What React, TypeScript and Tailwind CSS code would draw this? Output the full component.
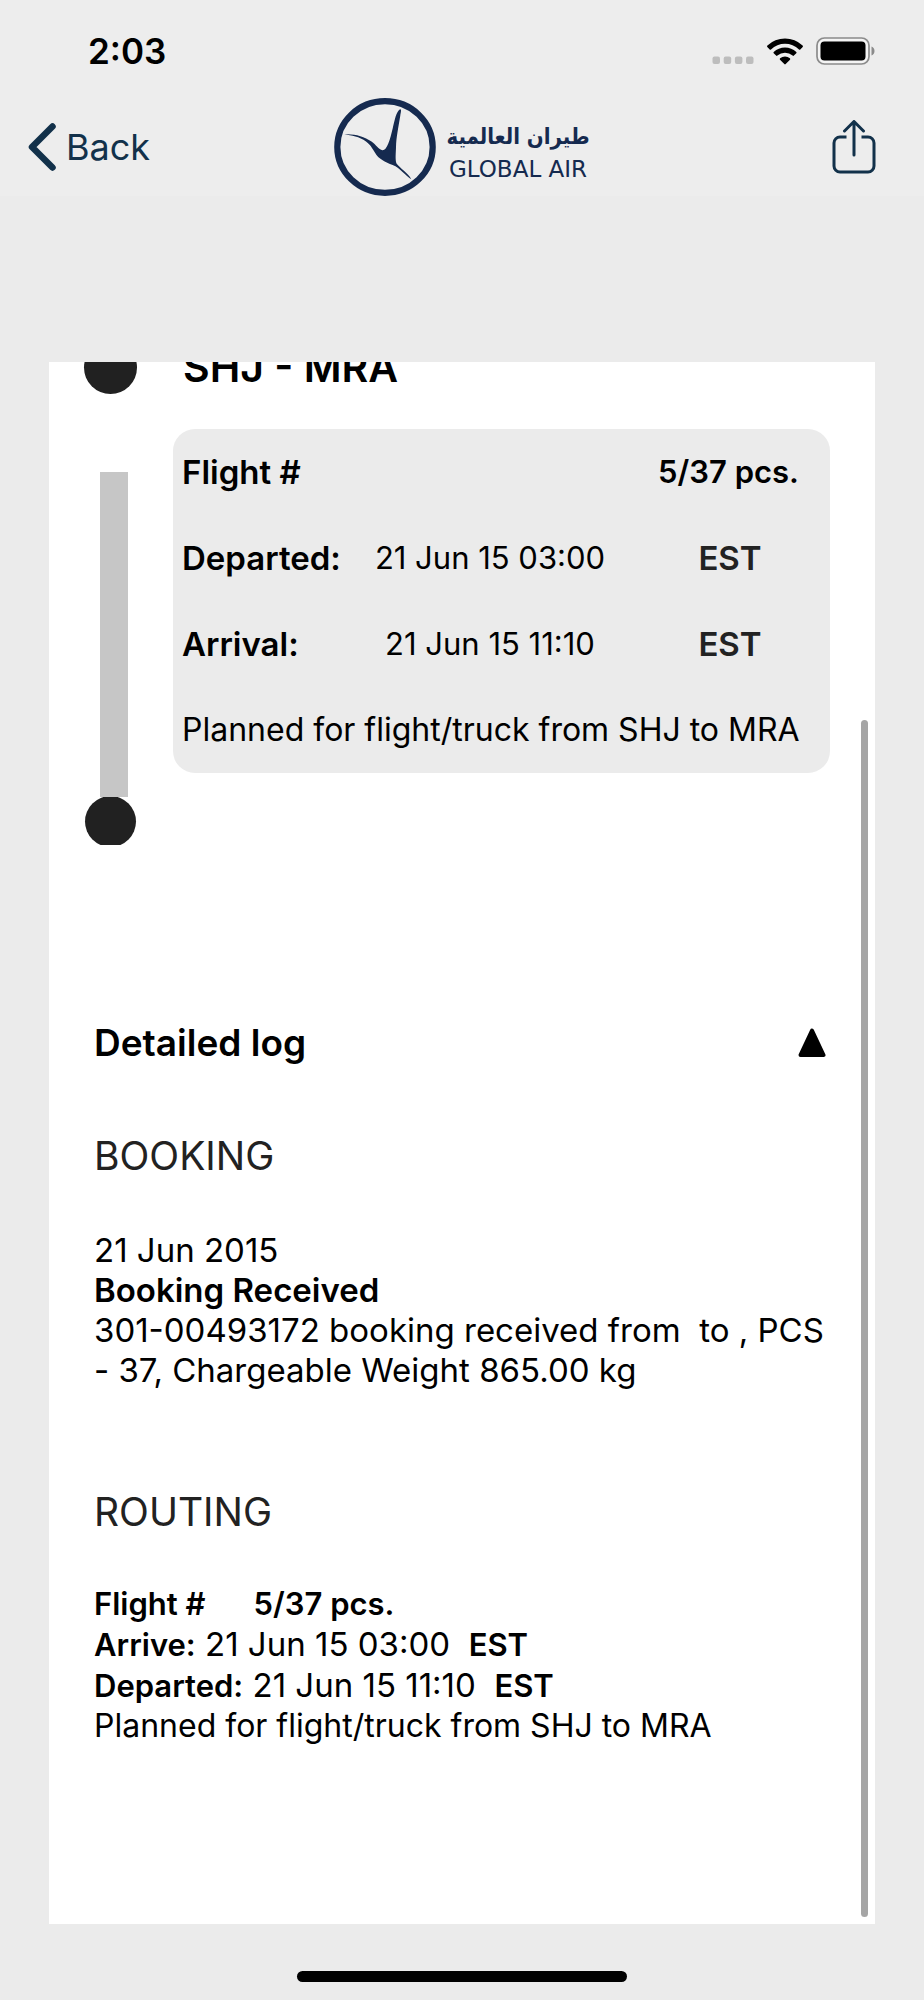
import React, { useState } from "react";

type Leg = { label: string; time: string; zone: string };

const legs: Leg[] = [
  { label: "Departed:", time: "21 Jun 15 03:00", zone: "EST" },
  { label: "Arrival:", time: "21 Jun 15 11:10", zone: "EST" },
];

function StatusBar() {
  return (
    <div className="flex h-[98px] items-center justify-between pt-1 pr-12 pl-[88px]">
      <time className="text-[35px] leading-10 font-semibold text-black">2:03</time>
      <div className="flex items-center gap-3">
        <svg width="42" height="28" viewBox="0 0 42 28" aria-hidden="true" fill="#bdbdbd">
          <rect x="0.5" y="19.5" width="7.5" height="7.5" rx="2" />
          <rect x="11.7" y="19.5" width="7.5" height="7.5" rx="2" />
          <rect x="22.9" y="19.5" width="7.5" height="7.5" rx="2" />
          <rect x="34" y="19.5" width="7.5" height="7.5" rx="2" />
        </svg>
        <svg width="38" height="28" viewBox="0 0 38 28" aria-label="Wi-Fi" role="img" fill="#000">
          <path d="M1.4 8.6a25.4 25.4 0 0 1 35.2 0c.5.5.5.9.1 1.4l-2.4 2.4c-.4.4-.8.4-1.3 0a20.4 20.4 0 0 0-28 0c-.5.4-.9.4-1.3 0L1.3 10c-.4-.5-.4-.9.1-1.4z" />
          <path d="M7.7 15a16.4 16.4 0 0 1 22.6 0c.4.4.4.8 0 1.3l-2.4 2.3c-.4.4-.8.4-1.3 0a11.2 11.2 0 0 0-15.2 0c-.5.4-.9.4-1.3 0l-2.4-2.3c-.4-.5-.4-.9 0-1.3z" />
          <path d="M14.1 21.3a7.5 7.5 0 0 1 9.8 0c.5.5.5.9.1 1.4l-4.3 4.3c-.5.5-.9.5-1.4 0L14 22.7c-.4-.5-.4-.9.1-1.4z" />
        </svg>
        <svg width="60" height="28" viewBox="0 0 60 28" aria-label="Battery full" role="img">
          <rect x="1" y="1" width="52" height="26" rx="7.5" fill="#f4f4f4" stroke="#8b8b8b" strokeWidth="1.7" />
          <rect x="4.5" y="4.5" width="45" height="19" rx="4" fill="#000" />
          <path d="M55.5 9.5c2 .8 3 2.5 3 4.5s-1 3.7-3 4.5z" fill="#8b8b8b" />
        </svg>
      </div>
    </div>
  );
}

function Logo() {
  return (
    <div className="flex items-center gap-[10px] text-[#152a4f]">
      <svg width="102" height="98" viewBox="0 1 102 98" aria-hidden="true">
        <ellipse cx="51" cy="50" rx="47.7" ry="45.8" fill="none" stroke="currentColor" strokeWidth="6.2" />
        <path
          fill="currentColor"
          d="M10.3 37.3C20 36.5 30 39.3 37.5 44.5C42 47.5 44.5 52.5 48.5 53.3C53 53.6 56 43 58.8 31C60.8 22.5 62 15.5 66 12.3C67.8 12 66.8 15.5 66.3 18.5C64.3 31 62.3 40 62 50C61.9 56 61 62.5 62.5 66.5C66 71.5 74 75.5 77.3 82.3C73.5 80.5 68.5 74 61.5 69.3C54 66 46.5 63.5 42.5 58C39.5 53.5 37 48 32 44.5C25.5 39.5 17.5 38.5 10.3 37.3Z"
        />
      </svg>
      <div className="flex flex-col items-center gap-1 pt-2">
        <span
          lang="ar"
          dir="rtl"
          className="font-['DejaVu_Sans_Condensed','DejaVu_Sans',sans-serif] text-[22px] leading-8 font-bold whitespace-nowrap"
        >
          طيران العالمية
        </span>
        <span className="font-['DejaVu_Sans',sans-serif] text-[23px] leading-6 whitespace-nowrap">GLOBAL AIR</span>
      </div>
    </div>
  );
}

function NavBar() {
  return (
    <nav className="grid h-[98px] grid-cols-[1fr_auto_1fr] items-center px-7 text-[#12314a]">
      <button type="button" className="flex items-center gap-[10px] justify-self-start text-[36px] leading-10">
        <svg width="28" height="48" viewBox="0 0 28 48" fill="none" aria-hidden="true">
          <path d="M24.5 3.5L4 24L24.5 44.5" stroke="currentColor" strokeWidth="6.5" strokeLinecap="round" strokeLinejoin="round" />
        </svg>
        Back
      </button>
      <Logo />
      <button type="button" aria-label="Share" className="mr-5 justify-self-end">
        <svg width="44" height="54" viewBox="0 0 44 54" fill="none" stroke="currentColor" strokeWidth="3" aria-hidden="true">
          <path d="M14.5 17H8a6 6 0 0 0-6 6v23a6 6 0 0 0 6 6h28a6 6 0 0 0 6-6V23a6 6 0 0 0-6-6h-6.5" />
          <path d="M22 35V2M12.5 11L22 1.5L31.5 11" strokeLinecap="round" strokeLinejoin="round" />
        </svg>
      </button>
    </nav>
  );
}

function Timeline() {
  return (
    <section>
      <div className="-mt-[21px] flex h-[53px] items-center">
        <div className="flex w-[134px] shrink-0 pl-[35px]">
          <span className="size-[53px] rounded-full bg-[#212121]" />
        </div>
        <h2 className="text-[41px] leading-[53px] font-semibold">SHJ - MRA</h2>
      </div>

      <div className="flex pt-[35px] pr-[45px]">
        <div className="flex w-[124px] shrink-0 flex-col pt-[43px]">
          <span className="ml-[51px] h-[325px] w-7 bg-[#c6c6c6]" />
          <span className="ml-[35px] flex h-12 w-[53px] items-center justify-center overflow-hidden">
            <span className="size-[51px] shrink-0 rounded-full bg-[#212121]" />
          </span>
        </div>
        <div className="min-w-0 flex-1 self-start rounded-[22px] bg-[#ebebeb] text-[33px] leading-[86px]">
          <div className="flex justify-between pr-[31px] pl-[9px] font-semibold">
            <span>Flight #</span>
            <span className="text-[31px]">5/37 pcs.</span>
          </div>
          {legs.map((leg) => (
            <div key={leg.label} className="grid grid-cols-[148px_1fr_160px] pr-5 pl-[9px]">
              <span className="font-semibold whitespace-nowrap">{leg.label}</span>
              <span className="text-center text-[31px] whitespace-nowrap">{leg.time}</span>
              <span className="text-center font-semibold text-[#222]">{leg.zone}</span>
            </div>
          ))}
          <p className="pl-[9px] text-[32px] leading-[86px] whitespace-nowrap">
            Planned for flight/truck from SHJ to MRA
          </p>
        </div>
      </div>
    </section>
  );
}

function DetailedLog() {
  const [open, setOpen] = useState(true);
  return (
    <section className="px-[45px] pt-[175px] text-[33px] leading-10">
      <h2>
        <button
          type="button"
          aria-expanded={open}
          onClick={() => setOpen(!open)}
          className="flex w-full items-center justify-between pr-[3px] text-[37px] leading-[46px] font-semibold"
        >
          Detailed log
          <svg width="30" height="30" viewBox="0 0 30 30" aria-hidden="true" className={open ? "" : "rotate-180"}>
            <path d="M15 2.5L26.5 27H3.5Z" stroke="#000" strokeWidth="4" strokeLinejoin="round" />
          </svg>
        </button>
      </h2>
      {open && (
        <>
          <h3 className="mt-[66px] text-[39px] leading-[48px] text-[#222]">BOOKING</h3>
          <div className="mt-[50px] whitespace-pre-wrap">
            <p>21 Jun 2015</p>
            <p className="font-semibold">Booking Received</p>
            <p>{"301-00493172 booking received from  to , PCS - 37, Chargeable Weight 865.00 kg"}</p>
          </div>
          <h3 className="mt-[98px] text-[39px] leading-[48px] text-[#222]">ROUTING</h3>
          <div className="mt-12">
            <p className="flex gap-12 text-[31px] font-semibold">
              <span>Flight #</span>
              <span>5/37 pcs.</span>
            </p>
            <p className="whitespace-pre">
              <b className="text-[31px] font-semibold">Arrive:</b> 21 Jun 15 03:00{"  "}
              <b className="text-[31px] font-semibold">EST</b>
            </p>
            <p className="whitespace-pre">
              <b className="text-[31px] font-semibold">Departed:</b> 21 Jun 15 11:10{"  "}
              <b className="text-[31px] font-semibold">EST</b>
            </p>
            <p className="text-[32px]">Planned for flight/truck from SHJ to MRA</p>
          </div>
        </>
      )}
    </section>
  );
}

export default function App() {
  return (
    <div className="flex min-h-screen flex-col bg-[#ebebeb] font-[Inter,sans-serif] text-black">
      <header className="bg-[#ededed]">
        <StatusBar />
        <NavBar />
      </header>
      <main className="relative mx-[49px] mt-[166px] flex-1 overflow-hidden bg-white">
        <Timeline />
        <DetailedLog />
        <div className="absolute top-[358px] right-[7px] bottom-[7px] w-[7px] rounded-full bg-[#a5a5a5]" />
      </main>
      <footer className="flex h-[76px] items-end justify-center pb-[18px]">
        <span className="h-[11px] w-[330px] rounded-full bg-black" />
      </footer>
    </div>
  );
}
